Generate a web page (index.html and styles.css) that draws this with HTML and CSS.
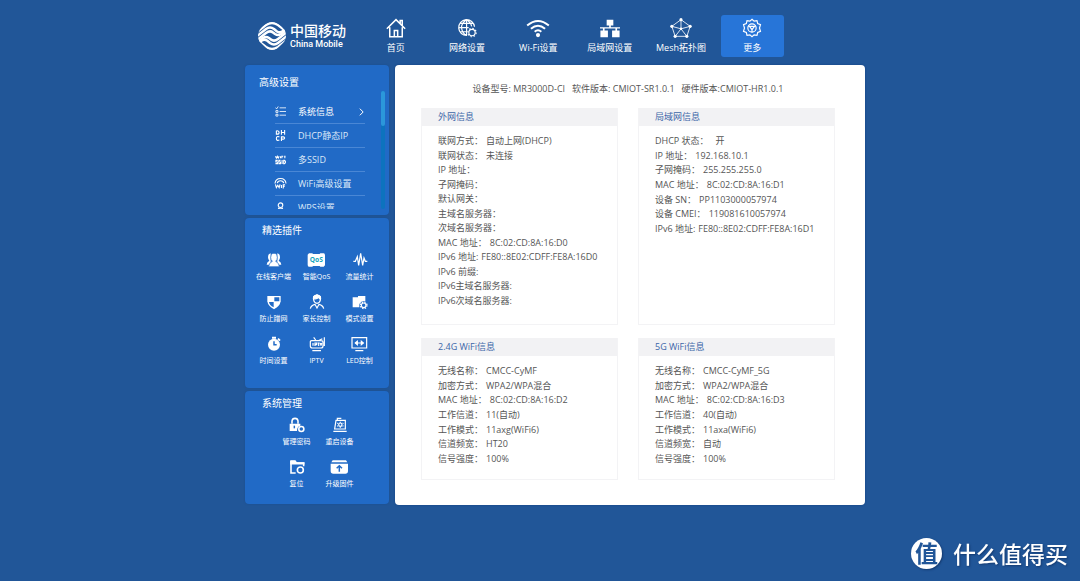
FILE: index.html
```html
<!DOCTYPE html>
<html lang="zh-CN">
<head>
<meta charset="utf-8">
<meta name="viewport" content="width=device-width, initial-scale=1">
<title>中国移动 路由器管理</title>
<link rel="stylesheet" href="styles.css">
</head>
<body>
<div class="page">
  <header class="topbar">
    <a class="brand" href="#">
      <svg class="brand-mark" viewBox="0 0 28 28" aria-hidden="true">
        <defs><clipPath id="disc"><path d="M14 0C18 0 21 2 24 5C27 8 28 11 28 14C28 18 26 20 23 23C20 26 18 28 14 28C10 28 8 26 5 23C2 20 0 18 0 14C0 11 1 8 4 5C7 2 10 0 14 0Z"/></clipPath></defs>
        <g clip-path="url(#disc)" fill="none" stroke="#fff" stroke-width="2.5">
          <path d="M-1 10L8 3Q14 -1 20 3L29 10"/>
          <path d="M-1 14L8 7Q12 4 16 7L19 9.500Q22 11.500 25 9L29 6"/>
          <path d="M-1 18L8 11Q12 8 15 10.500L17 12Q20 14 23 12L29 7.500"/>
          <path d="M29 10L20 17Q16 20 13 17.500L11 16Q8 14 5 16L-1 20.500"/>
          <path d="M29 14L20 21Q16 24 12 21L9 18.500Q6 16.500 3 19L-1 22"/>
          <path d="M29 18L20 25Q14 29 8 25L-1 18"/>
        </g>
      </svg>
      <span class="brand-text"><span class="brand-cn">中国移动</span><span class="brand-en">China Mobile</span></span>
    </a>
    <nav class="nav">
      <a href="#"><svg viewBox="0 0 24 24" class="line"><path d="M1 13L12 2L23 13M4.500 11V22.500H19.500V11M10 22V15H14V22M17 7V3H19.500V9"/></svg>首页</a>
      <a href="#"><svg viewBox="0 0 24 24" class="line thin"><path d="M12 21A9.500 9.500 0 1 1 21 10.500M11.500 2V21M2 11.500H14M3.500 6.500H19.500M3.500 16.500H12M11.500 2Q5 6 5.500 12T11.500 21M11.500 2Q17 5.500 17.500 10"/><circle cx="18" cy="17.500" r="3.800"/><circle cx="18" cy="17.500" r="5" stroke-dasharray="1.700 2.200"/></svg>网络设置</a>
      <a href="#"><svg viewBox="0 0 24 24" class="line wide"><path d="M-1 9Q12 -2 25 9M3.500 13Q12 5.500 20.500 13M8 16.500Q12 13 16 16.500"/><circle cx="12" cy="20.500" r="1.300" class="fill"/></svg>Wi-Fi设置</a>
      <a href="#"><svg viewBox="0 0 24 24" class="solid"><path d="M8 2H16V9H13V11H24V12.500H20.500V15H23.500V23H14.500V15H18.500V12.500H5.500V15H9.500V23H0.500V15H3.500V12.500H0V11H11V9H8Z"/></svg>局域网设置</a>
      <a href="#"><svg viewBox="0 0 24 24" class="line hair"><path d="M12 2L23 10L19 22H5L1 10ZM12 2V13L1 10M12 13L23 10M12 13L5 22M12 13L19 22"/><g class="dots"><circle cx="12" cy="2" r="1.900"/><circle cx="23" cy="10" r="1.900"/><circle cx="19" cy="22" r="1.900"/><circle cx="5" cy="22" r="1.900"/><circle cx="1" cy="10" r="1.900"/><circle cx="12" cy="13" r="1.500"/></g></svg>Mesh拓扑图</a>
      <a href="#" class="active" aria-current="page"><svg viewBox="0 0 24 24" class="line thin"><path d="M12 1.500L14.500 3.800L18 3.200L18.800 6.600L22.200 8L21 12L22.200 16L18.800 17.400L18 20.800L14.500 20.200L12 22.500L9.500 20.200L6 20.800L5.200 17.400L1.800 16L3 12L1.800 8L5.200 6.600L6 3.200L9.500 3.800Z"/><circle cx="12" cy="12" r="5"/><path d="M9 10H15L12 14ZM12 14V17M9 10L7.500 9.500M15 10L16.500 9.500"/></svg>更多</a>
    </nav>
  </header>

  <div class="layout">
    <aside class="sidebar">
      <section class="panel advanced">
        <h2>高级设置</h2>
        <div class="scroller">
          <ul class="menu">
            <li><a href="#" class="current"><svg viewBox="0 0 24 24" class="line"><path d="M10 4H24M10 12H24M10 20H24M1 4L4 6L7 1"/><path d="M2 10H6.500V14H2ZM2 18H6.500V22H2Z"/></svg><span>系统信息</span><svg viewBox="0 0 12 24" class="line wide chevron"><path d="M2 4L10 12L2 20"/></svg></a></li>
            <li><a href="#"><svg viewBox="0 0 24 24" class="line wide"><path d="M3 1.500V9H5Q9 9 9 5.500T5 1.500H3M14 0V10.500M21 0V10.500M14 5.500H21M9.500 15Q3 12.500 3 18.500T9.500 22M14 24V15H18Q21 15 21 17.500T18 20H14"/></svg><span>DHCP静态IP</span></a></li>
            <li><a href="#"><svg viewBox="0 0 24 24" class="line wide"><path d="M1 5L3 9L5 5L7 9L9 5M12 5V9M15 9V5H18M20 5H23M21.500 5V9M6 14H2V17.500H6V21H1M12 14H8.500V17.500H12V21H8M15.500 13V22M19 14V21H21Q23 20 23 17.500T21 14Z"/></svg><span>多SSID</span></a></li>
            <li><a href="#"><svg viewBox="0 0 24 24" class="line wide"><path d="M0 12Q1 1 12 1T24 12M5 11Q6 6 12 6T19 11M1 14L3 21L6 16L9 21L11 14M14 15V22M18 23V15H22M18 18.500H21"/></svg><span>WiFi高级设置</span></a></li>
            <li><a href="#"><svg viewBox="0 0 24 24" class="line wide"><circle cx="12" cy="7" r="5"/><path d="M9 12L5 20M15 12L19 20M9 15H15"/></svg><span>WPS设置</span></a></li>
          </ul>
          <div class="track"><div class="thumb"></div></div>
        </div>
      </section>

      <section class="panel plugins">
        <h2>精选插件</h2>
        <div class="tiles">
          <a href="#"><svg viewBox="0 0 24 24"><path class="fill" d="M8 2Q3 2 3 8Q3 11 5 13Q1 15 1 19H7V2ZM16 2Q21 2 21 8Q21 11 19 13Q23 15 23 19H17V2Z"/><path class="fill edge" d="M12 2Q7 2 7 8Q7 12 9.500 14Q4.500 16 4 22H20Q19.500 16 14.500 14Q17 12 17 8Q17 2 12 2Z"/></svg>在线客户端</a>
          <a href="#"><svg viewBox="0 0 28 24" class="solid"><path d="M3 2H8L9 3H19L20 2H25Q27 2 27 5V20L25 22H20L19 21H9L8 22H3Q1 22 1 19V4Z"/><text x="14" y="15" text-anchor="middle">QoS</text></svg>智能QoS</a>
          <a href="#"><svg viewBox="0 0 24 24" class="line"><path d="M2 14H5L8 7L10 20L13 2L16 20L18 9L20 14H23"/></svg>流量统计</a>
          <a href="#"><svg viewBox="0 0 24 24"><path class="fill" d="M2 3H22V11Q21 18 12 23Q3 18 2 11Z"/><path class="cut" d="M12.500 5H20V11H12.500ZM11.500 12V20Q5 17 4.500 12Z"/></svg>防止蹭网</a>
          <a href="#"><svg viewBox="0 0 24 24" class="line"><path d="M7 9Q5 2 12 2T17 9Q16 14 12 14T7 9ZM2 22Q3 17 9 15.500L12 21L15 15.500Q21 17 22 22"/><path class="fill" d="M7 7Q12 8 14 5L17 8V4L12 1L7 4Z"/></svg>家长控制</a>
          <a href="#"><svg viewBox="0 0 24 24"><path class="fill" d="M1 5H9V3H20V11H15L11 15V20H1Z"/><g class="line"><circle cx="17.500" cy="17" r="3.500"/><circle cx="17.500" cy="17" r="5" stroke-dasharray="2 2"/></g></svg>模式设置</a>
          <a href="#"><svg viewBox="0 0 24 24"><path class="fill" d="M9 1H15V4H9ZM19 3L22 6L20 8L17 5Z"/><circle cx="12" cy="13" r="9" class="fill"/><path class="ink" d="M12 8V13H16"/></svg>时间设置</a>
          <a href="#"><svg viewBox="0 0 24 24" class="line"><path d="M4 7H18Q21 7 21 9V15Q21 18 18 18H5Q2 18 2 15V9Q2 7 4 7ZM7 2L10 6M23 2V15M20 4L14 7M5 22H18M6 10.500V14.500M9 15V10.500H11.500V13H9M13 10.500H16M14.500 10.500V15M17 10.500L18 14.500L19 10.500"/></svg>IPTV</a>
          <a href="#"><svg viewBox="0 0 28 24" class="line"><path d="M3 2.500H25V18H3ZM8 22H20M8 10.500H20"/><path class="fill" d="M11 8L8 10.500L11 13ZM17 8L20 10.500L17 13Z"/></svg>LED控制</a>
        </div>
      </section>

      <section class="panel system">
        <h2>系统管理</h2>
        <div class="tiles two">
          <a href="#"><svg viewBox="0 0 24 24"><path class="fill" d="M1 10H17V13Q12 14 12 21H1Z"/><g class="line wide"><path d="M4.500 10V6Q5 2 9 2T13.500 6V10"/><circle cx="18.500" cy="18" r="3.800"/></g><path class="ink" d="M8 13V17"/></svg>管理密码</a>
          <a href="#"><svg viewBox="0 0 24 24" class="line"><path d="M6 5H20V18H4ZM2 21.500H22M8 4V2H14"/><circle cx="12.500" cy="11.500" r="2.500"/><path d="M12.500 7V8.500M12.500 14.500V16M8 9L9 10M8 14L9 13M16 10L17 9M16 13L17 14"/></svg>重启设备</a>
          <a href="#"><svg viewBox="0 0 24 24" class="line wide"><path d="M3 3V21H10M2 3H9L11 6H22V11"/><path class="fill" d="M3 4H9L11 6H22V7H3Z"/><circle cx="17" cy="16.500" r="4.500"/></svg>复位</a>
          <a href="#"><svg viewBox="0 0 28 24"><path class="fill" d="M4 2H24L26 5H2ZM1 7H27V18Q27 22 23 22H5Q1 22 1 18Z"/><path class="ink" d="M14 19V11M10 14L14 10L18 14"/></svg>升级固件</a>
        </div>
      </section>
    </aside>

    <main class="content">
      <p class="versions"><span>设备型号: MR3000D-CI</span><span>软件版本: CMIOT-SR1.0.1</span><span>硬件版本:CMIOT-HR1.0.1</span></p>
      <div class="cards">
        <section class="card">
          <h3>外网信息</h3>
          <dl class="long">
            <div><dt>联网方式：</dt><dd>自动上网(DHCP)</dd></div>
            <div><dt>联网状态：</dt><dd>未连接</dd></div>
            <div><dt>IP 地址：</dt><dd></dd></div>
            <div><dt>子网掩码：</dt><dd></dd></div>
            <div><dt>默认网关：</dt><dd></dd></div>
            <div><dt>主域名服务器：</dt><dd></dd></div>
            <div><dt>次域名服务器：</dt><dd></dd></div>
            <div><dt>MAC 地址：</dt><dd>8C:02:CD:8A:16:D0</dd></div>
            <div><dt>IPv6 地址:</dt><dd>FE80::8E02:CDFF:FE8A:16D0</dd></div>
            <div><dt>IPv6 前缀:</dt><dd></dd></div>
            <div><dt>IPv6主域名服务器:</dt><dd></dd></div>
            <div><dt>IPv6次域名服务器:</dt><dd></dd></div>
          </dl>
        </section>
        <section class="card">
          <h3>局域网信息</h3>
          <dl>
            <div><dt>DHCP 状态：</dt><dd class="spaced">开</dd></div>
            <div><dt>IP 地址：</dt><dd>192.168.10.1</dd></div>
            <div><dt>子网掩码：</dt><dd>255.255.255.0</dd></div>
            <div><dt>MAC 地址：</dt><dd>8C:02:CD:8A:16:D1</dd></div>
            <div><dt>设备 SN：</dt><dd>PP1103000057974</dd></div>
            <div><dt>设备 CMEI：</dt><dd>119081610057974</dd></div>
            <div><dt>IPv6 地址:</dt><dd>FE80::8E02:CDFF:FE8A:16D1</dd></div>
          </dl>
        </section>
        <section class="card">
          <h3>2.4G WiFi信息</h3>
          <dl>
            <div><dt>无线名称：</dt><dd>CMCC-CyMF</dd></div>
            <div><dt>加密方式：</dt><dd>WPA2/WPA混合</dd></div>
            <div><dt>MAC 地址：</dt><dd>8C:02:CD:8A:16:D2</dd></div>
            <div><dt>工作信道：</dt><dd>11(自动)</dd></div>
            <div><dt>工作模式：</dt><dd>11axg(WiFi6)</dd></div>
            <div><dt>信道频宽：</dt><dd>HT20</dd></div>
            <div><dt>信号强度：</dt><dd>100%</dd></div>
          </dl>
        </section>
        <section class="card">
          <h3>5G WiFi信息</h3>
          <dl>
            <div><dt>无线名称：</dt><dd>CMCC-CyMF_5G</dd></div>
            <div><dt>加密方式：</dt><dd>WPA2/WPA混合</dd></div>
            <div><dt>MAC 地址：</dt><dd>8C:02:CD:8A:16:D3</dd></div>
            <div><dt>工作信道：</dt><dd>40(自动)</dd></div>
            <div><dt>工作模式：</dt><dd>11axa(WiFi6)</dd></div>
            <div><dt>信道频宽：</dt><dd>自动</dd></div>
            <div><dt>信号强度：</dt><dd>100%</dd></div>
          </dl>
        </section>
      </div>
    </main>
  </div>
</div>
<div class="watermark"><span class="seal">值</span><span>什么值得买</span></div>
</body>
</html>
```
FILE: styles.css
```css
* { box-sizing: border-box; }
body {
  margin: 0;
  min-height: 100vh;
  padding-left: 30px;
  background: #215698;
  color: #555;
  font: 9px/14px "Open Sans", "Noto Sans CJK SC", sans-serif;
}
h2, h3, p, ul, dl, dd { margin: 0; padding: 0; font-weight: 400; }
ul { list-style: none; }
a { color: #fff; text-decoration: none; }
svg { display: block; overflow: visible; }

.line { fill: none; stroke: #fff; stroke-width: 1.8; }
.hair { stroke-width: 1; }
.thin { stroke-width: 1.4; }
.wide { stroke-width: 2.4; }
.solid, .fill { fill: #fff; }
.dots { fill: #fff; stroke: none; }
.edge { stroke: #216ac6; stroke-width: 1; }
.cut { fill: #216ac6; }
.ink { fill: none; stroke: #216ac6; stroke-width: 2.2; }

.page { max-width: 620px; margin: 0 auto; }
.topbar {
  display: flex;
  align-items: flex-start;
  min-height: 65px;
  padding: 15px 81px 0 13px;
}
.brand { display: flex; align-items: center; gap: 4px; margin-top: 7px; width: 106px; flex: none; }
.brand-mark { width: 28px; height: 28px; flex: none; }
.brand-text { display: flex; flex-direction: column; gap: 1px; white-space: nowrap; }
.brand-cn { font-size: 14px; line-height: 14px; font-weight: 500; font-family: "Noto Sans CJK SC", sans-serif; }
.brand-en { font-family: Roboto, sans-serif; font-size: 9px; line-height: 12px; font-weight: 500; }
.nav { flex: 1; display: grid; grid-template-columns: repeat(6, 1fr); gap: 8px; }
.nav a {
  display: flex;
  flex-direction: column;
  align-items: center;
  gap: 2px;
  padding: 3px 0 2px;
  border-radius: 3px;
  white-space: nowrap;
}
.nav svg { width: 20px; height: 20px; margin-bottom: 1px; }
.nav .active { background: #2775d8; }

.layout { display: grid; grid-template-columns: 144px 1fr; gap: 6px; }
.sidebar { display: flex; flex-direction: column; gap: 3px; }
.panel {
  border-radius: 4px;
  background: #216ac6;
  box-shadow: 0 0 2px #1a4d8f;
  color: #fff;
}
.panel h2 { font-size: 10px; padding-left: 17px; }
.advanced { padding: 10px 4px 6px 0; }
.advanced h2 { padding-left: 14px; }
.scroller { display: flex; justify-content: space-between; height: 118px; margin-top: 2px; overflow: hidden; }
.menu { width: 90px; margin-left: 30px; padding-top: 9px; }
.menu a {
  display: flex;
  align-items: center;
  gap: 12px;
  height: 24px;
  border-bottom: 1px solid #4a87d5;
  color: #dbe8f8;
  white-space: nowrap;
}
.menu .current { color: #fff; }
.menu svg { width: 11px; height: 11px; flex: none; }
.menu .chevron { width: 5px; height: 10px; margin: 0 1px 0 auto; }
.track { width: 4px; border-radius: 2px; background: #0d73be; }
.thumb { height: 35px; border-radius: 2px; background: #2b97da; }

.plugins { padding: 5px 8px 22px 7px; }
.plugins h2, .system h2 { padding-left: 10px; }
.tiles { display: grid; grid-template-columns: repeat(3, 1fr); gap: 12px 0; margin-top: 15px; }
.tiles a {
  display: flex;
  flex-direction: column;
  align-items: center;
  gap: 4px;
  font-size: 7px;
  line-height: 10px;
  white-space: nowrap;
}
.tiles svg { height: 16px; }
.tiles text { font: bold 10px "Open Sans", sans-serif; fill: #13a5bd; }
.system { padding: 5px 8px 15px 7px; }
.two { grid-template-columns: repeat(2, 43px); justify-content: center; margin: 7px 0 0 3px; }

.content {
  padding: 17px 30px 25px 26px;
  border-radius: 4px;
  background: #fff;
  box-shadow: 0 0 2px #123f7d;
}
.versions { display: flex; justify-content: center; gap: 7px; margin-bottom: 12px; }
.cards { display: grid; grid-template-columns: 1fr 1fr; gap: 13px 20px; }
.card { border: 1px solid #f3f3f5; border-top: 0; padding-bottom: 13px; }
.card h3 { padding: 2px 16px; background: #f2f2f4; color: #3c66a8; font-size: 9px; line-height: 14px; }
.card dl {
  display: flex;
  flex-direction: column;
  justify-content: space-between;
  min-height: 102px;
  margin: 8px 0 0 16px;
}
.card .long { min-height: 174px; margin-bottom: 3px; }
.card dl div { display: flex; gap: 3px; white-space: nowrap; }
.card .spaced { padding-left: 4px; }

.watermark {
  position: fixed;
  right: 12px;
  bottom: 12px;
  display: flex;
  align-items: center;
  gap: 11px;
  color: #fff;
  font: 500 23px/31px "Noto Sans CJK SC", sans-serif;
  text-shadow: 1px 1px 2px #143a70;
}
.seal {
  width: 31px;
  height: 31px;
  border-radius: 50%;
  background: #fff;
  box-shadow: 1px 1px 2px #143a70;
  color: #215698;
  font-size: 23px;
  line-height: 29px;
  font-weight: 700;
  text-align: center;
  text-shadow: none;
}
```
